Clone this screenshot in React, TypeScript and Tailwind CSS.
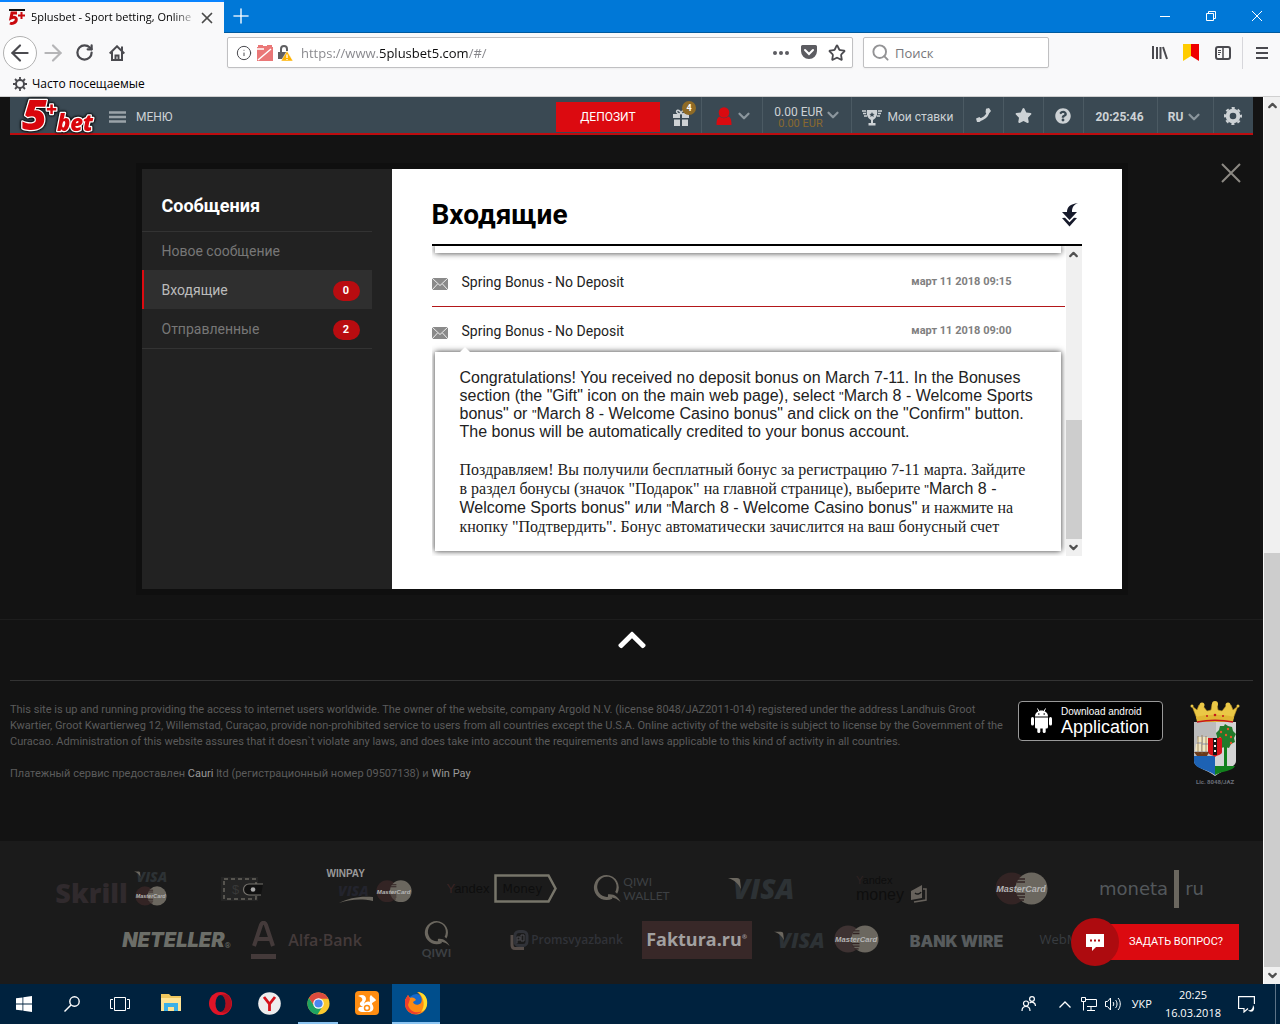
import type { ReactNode } from "react";
import { FaStar, FaQuestionCircle, FaChevronUp } from "react-icons/fa";
import {
	ArrowLeft,
	ArrowRight,
	ChevronDown,
	ChevronUp,
	Info,
	Plus,
	RotateCw,
	Search,
	Star,
	X,
} from "lucide-react";

const ui = "font-['Open_Sans','Noto_Sans',sans-serif]";

function SiteLogo() {
	return (
		<svg
			width="80"
			height="38"
			viewBox="0 0 80 38"
			aria-label="5plusbet"
			className="overflow-visible [filter:drop-shadow(0_0_1px_#000)_drop-shadow(0_0_1px_#000)]"
		>
			<g
				fill="#d9060c"
				stroke="#fff"
				strokeWidth="2.500"
				paintOrder="stroke"
				strokeLinejoin="round"
				fontFamily="'Open Sans', sans-serif"
				fontWeight="800"
				fontStyle="italic"
			>
				<text x="2" y="33" fontSize="43">5</text>
				<text x="26" y="19" fontSize="19">+</text>
				<text x="37" y="34" fontSize="22">bet</text>
			</g>
		</svg>
	);
}

function TitleBar() {
	return (
		<div className="flex h-[33px] items-stretch border-b border-[#005a9e] bg-[#0078d7]">
			<div className="-mb-px flex w-56 items-center border-t-2 border-[#0a84ff] bg-[#f9f9fa] pl-2 pr-2">
				<svg width="17" height="17" viewBox="0 0 17 17" className="shrink-0">
					<path d="M1 1h16" stroke="#111" strokeWidth="2" />
					<path d="M9 4H4L3 9c4-2 6 0 5 3-1 2-4 3-6 2" fill="none" stroke="#c9080d" strokeWidth="3" />
					<path d="M13.500 3v7M10 6.500h7" stroke="#c9080d" strokeWidth="2" />
				</svg>
				<span className="ml-1.5 flex-1 whitespace-nowrap text-[11px] text-black [mask-image:linear-gradient(to_right,black_85%,transparent)]">
					5plusbet - Sport betting, Online
				</span>
				<button aria-label="Закрыть вкладку" className="text-[#4a4a4a]">
					<X size={18} strokeWidth={2.3} />
				</button>
			</div>
			<button aria-label="Новая вкладка" className="px-[5px] text-white/85">
				<Plus size={24} strokeWidth={1.6} />
			</button>
			<div className="ml-auto flex text-white">
				<button aria-label="Свернуть" className="flex w-[46px] items-center justify-center">
					<svg width="10" height="10"><path d="M0 5.500h10" stroke="currentColor" /></svg>
				</button>
				<button aria-label="Развернуть" className="flex w-[46px] items-center justify-center">
					<svg width="10" height="10" fill="none" stroke="currentColor">
						<path d="M.5 2.500h7v7h-7zM2.500 2.500v-2h7v7h-2" />
					</svg>
				</button>
				<button aria-label="Закрыть" className="flex w-[46px] items-center justify-center">
					<svg width="10" height="10"><path d="M0 0l10 10M10 0L0 10" stroke="currentColor" /></svg>
				</button>
			</div>
		</div>
	);
}

function NavBar() {
	return (
		<div className="flex h-[39px] items-center bg-[#f9f9fa] text-[#4a4a4f]">
			<button
				aria-label="Назад"
				className="ml-[3px] flex size-[34px] items-center justify-center rounded-full border border-[#b1b1b1] bg-white"
			>
				<ArrowLeft size={26} strokeWidth={2} />
			</button>
			<button aria-label="Вперёд" className="ml-[3px] text-[#b5b5b7]">
				<ArrowRight size={26} strokeWidth={2} />
			</button>
			<button aria-label="Обновить" className="ml-[9px]">
				<RotateCw size={19} strokeWidth={2.8} />
			</button>
			<button aria-label="Домой" className="ml-[15px]">
				<svg width="16" height="16" viewBox="0 0 16 16" fill="none" stroke="currentColor" strokeWidth="2">
					<path d="M.7 8.500L8 1.300l7.300 7.200M3 7v8h10V7M13 1.500v4" />
					<path d="M6.500 15v-4.500h3V15" />
				</svg>
			</button>
			<div className="ml-[102px] flex h-[31px] min-w-0 flex-1 items-center rounded-xs border border-[#c0c0c2] bg-white px-2 shadow-xs">
				<Info size={16} strokeWidth={1.5} className="shrink-0" />
				<svg width="16" height="16" viewBox="0 0 16 16" className="ml-[5px] shrink-0">
					<path d="M1 0h5v1h4V0h5v2h1v14H0V2h1z" fill="#ea7777" />
					<path d="M0 4h7M1 15L14 4" stroke="#fff" strokeWidth="1.500" />
				</svg>
				<svg width="16" height="16" viewBox="0 0 16 16" className="ml-1 shrink-0">
					<path d="M4 8V4a3 3 0 0 1 6 0v2" fill="none" stroke="#5f5f61" strokeWidth="2" />
					<path d="M1 7h9v7H1z" fill="#5f5f61" />
					<path d="M10 6l6 10H4z" fill="#ffb300" stroke="#fff" strokeWidth=".5" />
					<path d="M10 9.500v3.500M10 14v1" stroke="#fff" strokeWidth="1.300" />
				</svg>
				<input
					aria-label="Адрес"
					defaultValue="https://www.5plusbet5.com/#/"
					className="ml-2 min-w-0 flex-1 bg-[linear-gradient(to_right,#85858a_77px,#0c0c0d_77px,#0c0c0d_168px,#85858a_168px)] bg-clip-text pt-0.5 text-[13px] text-transparent outline-none"
				/>
				<svg width="16" height="4" fill="#5c5c61">
					<circle cx="2" cy="2" r="2" /><circle cx="8" cy="2" r="2" /><circle cx="14" cy="2" r="2" />
				</svg>
				<svg width="16" height="15" viewBox="0 0 16 15" className="ml-3 shrink-0">
					<path d="M1.500 0h13A1.500 1.500 0 0 1 16 1.500V6A8 8 0 0 1 0 6V1.500A1.500 1.500 0 0 1 1.500 0z" fill="#5c5c61" />
					<path d="M4 5l4 4 4-4" fill="none" stroke="#fff" strokeWidth="2" strokeLinecap="round" />
				</svg>
				<Star size={18} strokeWidth={2.4} className="-mr-0.5 ml-[11px] shrink-0" />
			</div>
			<label className="ml-2.5 flex h-[31px] w-[186px] items-center rounded-xs border border-[#c0c0c2] bg-white pl-[7px] shadow-xs">
				<Search size={19} strokeWidth={2.4} className="text-[#939395]" />
				<input
					aria-label="Поиск"
					placeholder="Поиск"
					className="ml-[5px] w-32 pt-0.5 text-[13px] outline-none placeholder:text-[#77777b]"
				/>
			</label>
			<button aria-label="Библиотека" className="ml-[103px]">
				<svg width="16" height="15" stroke="currentColor" strokeWidth="2" fill="none">
					<path d="M1 1v13M5 2v12M8.500 2v12M11 2l4 12" />
				</svg>
			</button>
			<button aria-label="Закладки Яндекс" className="ml-[15px]">
				<svg width="16" height="17">
					<path d="M0 0h8v12L0 17z" fill="#ffcc00" />
					<path d="M8 0h8v17L8 12z" fill="#f00000" />
				</svg>
			</button>
			<button aria-label="Боковая панель" className="ml-4">
				<svg width="16" height="14" fill="none" stroke="currentColor">
					<rect x="1" y="1" width="14" height="12" rx="2" strokeWidth="2" />
					<path d="M8 1v12" strokeWidth="1.500" />
					<path d="M3 4.500h3M3 6.500h3M3 8.500h2" />
				</svg>
			</button>
			<span className="ml-[11px] h-8 w-px bg-[#d7d7db]" />
			<button aria-label="Меню" className="ml-[13px] mr-3">
				<svg width="12" height="12" stroke="currentColor" strokeWidth="2">
					<path d="M0 1h12M0 6h12M0 11h12" />
				</svg>
			</button>
		</div>
	);
}

function HeaderCell({ className, children }: { className: string; children: ReactNode }) {
	return (
		<div className={`flex items-center justify-center border-l border-[#4b5a63] ${className}`}>
			{children}
		</div>
	);
}

function HeaderChevron() {
	return <ChevronDown size={18} strokeWidth={3} className="shrink-0 text-[#8b969d]" />;
}

function SiteHeader() {
	return (
		<header className="flex h-[38px] items-stretch border-b-2 border-[#bd0c0f] bg-[#3a4953] text-xs text-[#cdd2d5]">
			<a href="#/" className="ml-2.5 w-20">
				<SiteLogo />
			</a>
			<button className="ml-[9px] flex items-center gap-2.5 pt-1">
				<svg width="17" height="12" stroke="#9aa3a9" strokeWidth="2.500">
					<path d="M0 1.500h17M0 6h17M0 10.500h17" />
				</svg>
				МЕНЮ
			</button>
			<button className="ml-auto mt-[5px] h-[30px] w-[104px] bg-[#dc0a10] text-white">
				ДЕПОЗИТ
			</button>
			<div className="relative flex w-[41px] items-center justify-center pt-1">
				<svg width="16" height="17" fill="currentColor">
					<path d="M0 5h7v4H0zM9 5h7v4H9zM1 10.500h6V17H1zM9 10.500h6V17H9z" />
					<path d="M7.500 5C3 5 3 1.500 4.500 1.200S8 3 8 5c0-2 2-4 3.500-3.800S13 5 8.500 5" fill="none" stroke="currentColor" strokeWidth="1.500" />
				</svg>
				<span className="absolute left-[22px] top-1 flex size-3.5 items-center justify-center rounded-full bg-[#8f6b26] text-[9px] font-bold text-white">
					4
				</span>
			</div>
			<HeaderCell className="w-[61px] gap-[3px] pl-1 pt-0.5">
				<svg width="16" height="18" fill="#d90a10">
					<circle cx="8" cy="5.500" r="5.300" />
					<path d="M3.500 9.500a6.500 6.500 0 0 0 9 0c2.500 1.200 3 4 3 8.500H.5c0-4.500.5-7.300 3-8.500z" />
				</svg>
				<HeaderChevron />
			</HeaderCell>
			<HeaderCell className="w-[89px] gap-px pl-0.5">
				<div className="pt-[5px] text-right leading-[11px]">
					<div>0.00 EUR</div>
					<div className="text-[11px] text-[#8a6a2f]">0.00 EUR</div>
				</div>
				<HeaderChevron />
			</HeaderCell>
			<HeaderCell className="w-28 gap-1.5 pt-1">
				<svg width="20" height="17" viewBox="0 0 20 17">
					<path d="M5 1h10c1 5-1 8.500-4 10v3h2.500v2.500h-7V14H9v-3C6 9.500 4 6 5 1z" fill="currentColor" />
					<path d="M0 2h4M1 4.500h3M2 7h3M20 2h-4M19 4.500h-3M18 7h-3" stroke="currentColor" strokeWidth="1.600" />
					<path d="M10 3l.8 1.700 1.900.2-1.400 1.200.4 1.900L10 7.100 8.300 8l.4-1.900-1.400-1.200 1.900-.2z" fill="#3a4953" />
				</svg>
				Мои ставки
			</HeaderCell>
			<HeaderCell className="w-10">
				<svg width="15" height="14" viewBox="0 0 15 14">
					<path d="M2 11.500C7 12 12 8 12 3" fill="none" stroke="currentColor" strokeWidth="2.600" />
					<path d="M9.500 4.500L10 .8 13 0l2 3-2.500 3zM0 10.500L3.500 9l2.500 3-2.500 2H1z" fill="currentColor" />
				</svg>
			</HeaderCell>
			<HeaderCell className="w-10"><FaStar size={17} /></HeaderCell>
			<HeaderCell className="w-10 pr-0.5 pt-0.5"><FaQuestionCircle size={16} /></HeaderCell>
			<HeaderCell className="w-[74px] pr-0.5 pt-1 font-bold">20:25:46</HeaderCell>
			<HeaderCell className="w-14 gap-0.5 pt-1 font-bold">
				RU
				<HeaderChevron />
			</HeaderCell>
			<HeaderCell className="w-10 pr-0.5 pt-0.5">
				<svg width="18" height="18" viewBox="-9 -9 18 18" fill="none" stroke="currentColor">
					<circle r="5.300" strokeWidth="4" />
					<circle r="8" strokeWidth="2" strokeDasharray="3.140 3.140" strokeDashoffset="1.570" />
				</svg>
			</HeaderCell>
		</header>
	);
}

const folders = [
	{ name: "Новое сообщение" },
	{ name: "Входящие", count: 0, active: true },
	{ name: "Отправленные", count: 2 },
];

function Sidebar() {
	return (
		<nav className="w-[250px] shrink-0 bg-[#222] pr-5">
			<h2 className="flex h-[63px] items-end border-b border-[#333] pb-[11px] pl-5 text-lg font-bold text-white">
				Сообщения
			</h2>
			<div className="-mt-px border-b border-[#333]">
				{folders.map((folder) => (
					<a
						key={folder.name}
						href="#/"
						className={`flex h-[39px] items-center justify-between border-l-2 pl-[18px] pr-3 text-sm ${
							folder.active
								? "border-[#dc0a10] bg-[#2f2f2f] text-[#bbb]"
								: "border-transparent text-[#777]"
						}`}
					>
						{folder.name}
						{folder.count !== undefined && (
							<span className="mt-0.5 flex h-5 w-[27px] items-center justify-center rounded-full bg-[#b90c10] pt-px text-[11px] font-bold text-white">
								{folder.count}
							</span>
						)}
					</a>
				))}
			</div>
		</nav>
	);
}

function MessageRow({ title, date }: { title: string; date: string }) {
	return (
		<div className="flex items-center text-sm text-[#222]">
			<svg width="16" height="12" className="mt-1">
				<path d="M0 0h16v12H0z" fill="#8a8a8a" />
				<path d="M0 0l8 7.500L16 0M0 12l5.500-6M16 12l-5.500-6" fill="none" stroke="#eee" />
			</svg>
			<span className="ml-3.5 flex-1">{title}</span>
			<time className="mr-[54px] text-[11px] font-bold text-[#808080]">{date}</time>
		</div>
	);
}

function Inbox() {
	return (
		<section className="flex min-w-0 flex-1 flex-col bg-white px-10 pb-[33px]">
			<div className="flex h-[77px] items-center justify-between border-b-2 border-black pt-4">
				<h1 className="text-[28px] font-bold text-black">Входящие</h1>
				<svg width="18" height="24" viewBox="0 0 18 24" fill="#161a2b" className="mr-[3px]">
					<path d="M17 0C9 1 6 4 6 9H1l7.500 8L16 9h-5c0-4 1-7 6-9z" />
					<path d="M1 15l3-.2 4.500 4.500 4.500-4.500 3 .2-7.500 8.500z" />
				</svg>
			</div>
			<div className="flex">
				<div className="min-w-0 flex-1 overflow-hidden pb-[5px]">
					<div className="ml-[3px] mr-[5px] h-[7px] shadow-[0_0_6px_#333]" />
					<div className="mt-[19px]">
						<MessageRow title="Spring Bonus - No Deposit" date="март 11 2018 09:15" />
					</div>
					<div className="mr-px mt-3.5 h-px bg-[#b3171a]" />
					<div className="mt-3.5">
						<MessageRow title="Spring Bonus - No Deposit" date="март 11 2018 09:00" />
					</div>
					<article className="relative ml-[3px] mr-[5px] mt-[11px] bg-white pb-[15px] pl-[25px] pr-[25px] pt-[17px] text-base text-[#222] shadow-[0_0_6px_#333]">
						<span className="absolute -top-[5px] left-[25px] border-x-[5px] border-b-[5px] border-x-transparent border-b-white" />
						<p className="font-['Liberation_Sans',Arial,sans-serif] leading-[18px]">
							Congratulations! You received no deposit bonus on March 7-11. In the Bonuses
							section (the "Gift" icon on the main web page), select{" "}
							<span className="text-[13px] leading-none">"</span>March 8 - Welcome Sports bonus" or{" "}
							<span className="text-[13px] leading-none">"</span>March 8 - Welcome Casino bonus" and
							click on the "Confirm" button. The bonus will be automatically credited to your
							bonus account.
						</p>
						<p className="mt-[19px] font-['Liberation_Serif','Times_New_Roman',serif] leading-[19px]">
							Поздравляем! Вы получили бесплатный бонус за регистрацию 7-11 марта. Зайдите в
							раздел бонусы (значок "Подарок" на главной странице), выберите{" "}
							<span className="font-['Liberation_Sans',Arial,sans-serif] leading-none">
								<span className="text-[13px] leading-none">"</span>March 8 - Welcome Sports bonus"
								или <span className="text-[13px] leading-none">"</span>March 8 - Welcome Casino
								bonus"
							</span>{" "}
							и нажмите на кнопку "Подтвердить". Бонус автоматически зачислится на ваш
							бонусный счет
						</p>
					</article>
				</div>
				<div className="flex w-4 flex-col items-center bg-[#f0f0f0] text-[#505050]">
					<ChevronUp size={13} strokeWidth={4} className="my-0.5" />
					<div className="flex-[157]" />
					<div className="w-full flex-[119] bg-[#cdcdcd]" />
					<ChevronDown size={13} strokeWidth={4} className="my-0.5" />
				</div>
			</div>
		</section>
	);
}

function Crest() {
	return (
		<svg width="50" height="76" viewBox="0 0 50 76">
			<path d="M4 21v39c0 7 12 8 21 15 9-7 21-8 21-15V21z" fill="#d4d4d4" />
			<path d="M4 21h22v34H4z" fill="#bcbcbc" />
			<path d="M4 55h21v19C17 68 4 68 4 60z" fill="#1d62b4" />
			<path d="M25 65h20c-2 5-13 5-20 9z" fill="#12801c" />
			<path d="M34 30h3v37h-3z" fill="#12801c" />
			<path
				d="M35 23l3 2 4 1 1 4 3 3-2 4 1 4-4 2-2 4-4-1-4 1-2-4-3-3 1-4-1-4 3-3 1-4 4 0z"
				fill="#227a2a"
			/>
			<g fill="#e8562a">
				<circle cx="31" cy="31" r="1.200" /><circle cx="38" cy="28" r="1.200" /><circle cx="41" cy="36" r="1.200" />
				<circle cx="36" cy="34" r="1.200" /><circle cx="41" cy="42" r="1.200" /><circle cx="30" cy="37" r="1.200" />
			</g>
			<path d="M18 37h14v14c0 3-5 3-7 5-2-2-7-2-7-5z" fill="#d6131b" />
			<path d="M23 37h4v17h-4z" fill="#161616" />
			<path d="M24 39h2v2h-2zM24 44h2v2h-2zM24 49h2v2h-2z" fill="#fff" />
			<path d="M8 36h4v5H7zM13 36h5v6h-5zM6 43h5v7H5zM12 44h6v6h-6z" fill="#efe5c2" />
			<path d="M4 51h15l-2 4H7z" fill="#6b3a1b" />
			<path d="M12 34v19M8 35v17M16 35v17" stroke="#8a6a3c" strokeWidth=".7" />
			<path
				d="M2 5l5 4 2-5 4 1 4 5 4-1 1-6h5l1 6 4 1 4-5 5-1 2 5 5-4-5 13H7z"
				fill="#ebc846"
				stroke="#b98d20"
				strokeWidth=".6"
			/>
			<g fill="#ebc846">
				<circle cx="2" cy="5" r="1.500" /><circle cx="12" cy="4" r="2.500" /><circle cx="25" cy="3" r="3" />
				<circle cx="38" cy="4" r="2.500" /><circle cx="48" cy="5" r="1.500" />
			</g>
			<path d="M6 16c11-3 27-3 38 0l-1 5H7z" fill="#e0b633" />
			<path d="M7 21c11-2 25-2 36 0" stroke="#c7161c" strokeWidth="1.500" fill="none" />
			<g fill="#c7161c"><circle cx="17" cy="15" r="1" /><circle cx="25" cy="14" r="1.300" /><circle cx="33" cy="15" r="1" /></g>
		</svg>
	);
}

function Legal() {
	return (
		<div className="flex items-start border-t border-[#333] pt-5">
			<div className="min-w-0 flex-1 pt-px text-[11px] leading-4 text-[#5b5b5b]">
				<p>
					This site is up and running providing the access to internet users worldwide. The
					owner of the website, company Argold N.V. (license 8048/JAZ2011-014) registered under
					the address Landhuis Groot Kwartier, Groot Kwartierweg 12, Willemstad, Curaçao,
					provide non-prohibited service to users from all countries except the U.S.A. Online
					activity of the website is subject to license by the Government of the Curacao.
					Administration of this website assures that it doesn`t violate any laws, and does take
					into account the requirements and laws applicable to this kind of activity in all
					countries.
				</p>
				<p className="mt-4">
					Платежный сервис предоставлен <a href="#/" className="text-[#999]">Cauri</a> ltd
					(регистрационный номер 09507138) и <a href="#/" className="text-[#999]">Win Pay</a>
				</p>
			</div>
			<a
				href="#/"
				className="ml-3 flex h-10 w-[145px] shrink-0 items-center gap-[9px] rounded-sm border border-[#999] bg-black pl-3 font-['Liberation_Sans',Arial,sans-serif] text-white"
			>
				<svg width="21" height="26" viewBox="0 0 21 26" fill="#fff" className="shrink-0">
					<path d="M4 8.500C4 5 7 2.500 10.500 2.500S17 5 17 8.500z" />
					<path d="M6.500.5l1.500 3M14.500.5l-1.500 3" stroke="#fff" />
					<circle cx="7.800" cy="6" r=".8" fill="#000" />
					<circle cx="13.200" cy="6" r=".8" fill="#000" />
					<path d="M4 9.500h13V19a1.500 1.500 0 0 1-1.500 1.500h-10A1.500 1.500 0 0 1 4 19z" />
					<rect x="0" y="9" width="3" height="8.500" rx="1.500" />
					<rect x="18" y="9" width="3" height="8.500" rx="1.500" />
					<rect x="6.300" y="17" width="3" height="8" rx="1.500" />
					<rect x="11.700" y="17" width="3" height="8" rx="1.500" />
				</svg>
				<span className="whitespace-nowrap">
					<span className="block text-[10px] leading-[11px]">Download android</span>
					<span className="block text-lg leading-5">Application</span>
				</span>
			</a>
			<div className="ml-[27px] mr-[13px] flex w-[50px] shrink-0 flex-col items-center">
				<Crest />
				<span className="whitespace-nowrap text-[6px] font-bold leading-[10px] text-[#6a6e78]">
					Lic. 8048/JAZ
				</span>
			</div>
		</div>
	);
}

function MasterCard({ width, dark }: { width: number; dark?: string }) {
	return (
		<svg width={width} viewBox="0 0 53 33" className="shrink-0">
			<circle cx="16.500" cy="16.500" r="16" fill={dark ?? "#332424"} />
			<circle cx="36.500" cy="16.500" r="16" fill="#6b675f" />
			<path d="M23 7h7M22 10h8M21 22h9M22 25h8M24 28h5" stroke="#332424" strokeWidth="1.500" />
			<text
				x="26"
				y="20"
				textAnchor="middle"
				fontFamily="'Liberation Sans', sans-serif"
				fontSize="9"
				fontWeight="700"
				fontStyle="italic"
				fill="#b5b5b5"
			>
				MasterCard
			</text>
		</svg>
	);
}

function Visa({ width }: { width: number }) {
	return (
		<svg width={width} viewBox="0 0 68 23" className="shrink-0 overflow-visible">
			<text
				x="5"
				y="22"
				fontFamily="'Open Sans', sans-serif"
				fontSize="28"
				fontWeight="800"
				fontStyle="italic"
				fill="#2d3235"
			>
				VISA
			</text>
			<path d="M0 1h9c2 0 3 1 3 3l1 8C10 6 6 3 0 1z" fill="#6b675f" />
		</svg>
	);
}

function QiwiMark({ size }: { size: number }) {
	return (
		<svg width={size} height={size} viewBox="0 0 28 29">
			<path
				d="M13.500 0a13 13 0 1 0 6 24.500l-1-3a10 10.500 0 1 1 4-4l2 2A13 13 0 0 0 13.500 0z"
				fill="#6b675f"
			/>
			<path d="M15 20c6-1 11 3 13 8-4-4-8-5-13-5z" fill="#6b675f" />
		</svg>
	);
}

const firstRow: ReactNode[] = [
	<div className="flex items-center gap-1.5">
		<span className="pt-2 font-['Open_Sans',sans-serif] text-[27px] font-extrabold leading-none text-[#302a2d]">
			Skrill
		</span>
		<span className="flex flex-col items-center gap-1">
			<Visa width={34} />
			<MasterCard width={32} />
		</span>
	</div>,
	<svg width="42" height="26" viewBox="0 0 42 26" fill="none">
		<path d="M0 1h37v24H0z" fill="#242424" />
		<rect x="3" y="3" width="32" height="20" stroke="#67645e" strokeWidth="1.500" strokeDasharray="4 3" />
		<text x="11" y="18" fontSize="13" fontFamily="'Liberation Sans', sans-serif" fill="#383838">$</text>
		<path d="M42 8H28a5.500 5.500 0 0 0 0 11h12" fill="#111" stroke="#77746f" strokeWidth="1.200" />
		<circle cx="32" cy="13.500" r="2.300" fill="#aaa" />
	</svg>,
	<div className="flex w-[90px] flex-col pb-1">
		<span className="font-['Liberation_Sans',Arial,sans-serif] text-[10px] font-bold leading-[10px] text-[#999]">
			WINPAY
		</span>
		<span className="flex items-center gap-0.5 pl-2.5">
			<svg width="37" height="26" viewBox="0 0 37 26" className="shrink-0">
				<text
					x="1"
					y="17"
					fontFamily="'Open Sans', sans-serif"
					fontSize="14"
					fontWeight="800"
					fontStyle="italic"
					fill="#23242d"
				>
					VISA
				</text>
				<path d="M2 24c10-5 20-7 34-6v4c-14-3-24-1-34 2z" fill="#6b675f" />
			</svg>
			<MasterCard width={36} />
		</span>
	</div>,
	<div className="flex items-center gap-1 text-[#0e0e0e]">
		<span className="font-['Liberation_Sans',sans-serif] text-[13px]">
			<span className="text-[#3a2424]">Y</span>andex
		</span>
		<span className="relative flex h-[29px] w-[63px] items-center pl-[9px] font-['DejaVu_Sans','Open_Sans',sans-serif] text-xs">
			<svg width="63" height="29" viewBox="0 0 63 29" fill="none" className="absolute left-0 top-0">
				<path d="M1.500 1.500h53l7 13-7 13h-53z" stroke="#77756a" strokeWidth="2.500" />
			</svg>
			Money
		</span>
	</div>,
	<div className="flex items-center gap-0.5 font-['Lato',sans-serif] text-xs leading-[14px] text-[#3d4043]">
		<QiwiMark size={28} />
		<span>QIWI<br />WALLET</span>
	</div>,
	<Visa width={68} />,
	<div className="flex items-end gap-1.5 font-['Liberation_Sans',sans-serif] text-[#0e0e0e]">
		<span>
			<span className="block text-[11px] leading-[13px]"><span className="text-[#2e2222]">Y</span>andex</span>
			<span className="block text-base leading-4">money</span>
		</span>
		<svg width="17" height="19" viewBox="0 0 17 19">
			<path d="M1 7l11-6v13L1 16z" fill="#67625c" />
			<path d="M13 5h3v11l-12 2" fill="none" stroke="#67625c" strokeWidth="1.500" />
			<path d="M5 9c2 2 5 1 6-1" fill="none" stroke="#1b1b1b" strokeWidth="1.500" />
		</svg>
	</div>,
	<MasterCard width={53} />,
	<div className="flex items-center gap-1.5 font-['DejaVu_Sans',sans-serif] text-lg text-[#53585b]">
		moneta <span className="h-[38px] w-[5px] bg-[#6b675f]" /> ru
	</div>,
];

const secondRow: ReactNode[] = [
	<div className="flex items-end text-[#6c6e68]">
		<span className="font-['Inter',sans-serif] text-[20px] font-black italic leading-6">NETELLER</span>
		<span className="text-[8px] leading-3">®</span>
	</div>,
	<div className="flex items-center gap-3 text-[#443a3a]">
		<svg width="25" height="38" viewBox="0 0 25 38" fill="none" stroke="currentColor">
			<path d="M3 25L10 4c1-3 4-3 5 0l7 21M6 18h13" strokeWidth="4" />
			<path d="M0 35.500h25" strokeWidth="5" />
		</svg>
		<span className="font-['Open_Sans',sans-serif] text-base font-semibold">Alfa·Bank</span>
	</div>,
	<div className="flex flex-col items-center font-['Lato',sans-serif] text-xs font-bold leading-3 text-[#3d4043]">
		<QiwiMark size={26} />
		QIWI
	</div>,
	<div className="flex items-center gap-0.5 font-['Open_Sans',sans-serif] text-xs font-semibold text-[#303238]">
		<svg width="19" height="20" viewBox="0 0 19 20" fill="none" className="shrink-0">
			<path d="M2 5v10c0 2 1 3.500 3 3.500h9" stroke="#554c48" strokeWidth="3" />
			<rect x="5" y="1.500" width="12" height="14" rx="4" stroke="#303238" strokeWidth="3" />
			<path d="M7 13V7h3v3H7M11 11V5h3v6z" stroke="#4a4a50" />
		</svg>
		Promsvyazbank
	</div>,
	<div className="flex h-[38px] w-[110px] items-center justify-center bg-[#382828] font-['Open_Sans',sans-serif] text-[18px] font-bold text-[#a2a0a0]">
		Faktura.ru<span className="pb-1 text-[6px]">®</span>
	</div>,
	<div className="flex items-center gap-2">
		<Visa width={52} />
		<MasterCard width={45} dark="#3e3232" />
	</div>,
	<span className="whitespace-nowrap pt-0.5 font-['Inter',sans-serif] text-base font-black text-[#575b5d]">
		BANK WIRE
	</span>,
	<span className="w-[94px] pt-px font-['Open_Sans',sans-serif] text-[13px] text-[#383c40]">WebMoney</span>,
];

function Payments() {
	return (
		<div className="flex-1 bg-[#1b1b1b] pb-[19px] pt-[22px]">
			{[firstRow, secondRow].map((row, index) => (
				<div key={index} className="flex justify-center">
					{row.map((logo, i) => (
						<div key={i} className="flex h-[51px] w-[130px] items-center justify-center">
							{logo}
						</div>
					))}
				</div>
			))}
		</div>
	);
}

function ChatButton() {
	return (
		<button className="absolute bottom-[18px] right-6 flex items-center text-[11px] text-white">
			<span className="z-10 flex size-12 items-center justify-center rounded-full bg-[#ad0b0f]">
				<svg width="18" height="17" viewBox="0 0 18 17">
					<path d="M0 0h18v13H10l-4 4v-4H0z" fill="#fff" />
					<path d="M4 6.500h2M8 6.500h2M12 6.500h2" stroke="#ad0b0f" strokeWidth="2" />
				</svg>
			</span>
			<span className="-ml-6 flex h-9 items-center bg-[#dc0a10] pl-[34px] pr-4">ЗАДАТЬ ВОПРОС?</span>
		</button>
	);
}

function PageScrollbar() {
	return (
		<div className="flex w-[17px] shrink-0 flex-col items-center border-l border-white bg-[#f0f0f0] text-[#505050]">
			<ChevronUp size={13} strokeWidth={4} className="my-0.5" />
			<div className="flex-[439]" />
			<div className="w-full flex-[414] bg-[#cdcdcd]" />
			<ChevronDown size={13} strokeWidth={4} className="my-0.5" />
		</div>
	);
}

const taskIcons = [
	{
		name: "Проводник",
		icon: (
			<svg width="22" height="20" viewBox="0 0 22 20">
				<path d="M1 1h8l2 2h10v15H1z" fill="#f0c75e" />
				<path d="M1 5h20v13H1z" fill="#ffe394" />
				<path d="M4 18v-8h14v8h-4v-4H8v4z" fill="#3bb0e8" />
			</svg>
		),
	},
	{
		name: "Opera",
		icon: (
			<svg width="23" height="23" viewBox="0 0 23 23">
				<circle cx="11.500" cy="11.500" r="11.500" fill="#e01427" />
				<path d="M11.500 3c7-3 11 3 11 8.500S18 23 11.500 20C15 19 16.500 16 16.500 11.500S15 4 11.500 3z" fill="#b00f1e" />
				<ellipse cx="11.500" cy="11.500" rx="5" ry="8.500" fill="#00223e" />
			</svg>
		),
	},
	{
		name: "Яндекс",
		icon: (
			<svg width="23" height="23" viewBox="0 0 23 23">
				<circle cx="11.500" cy="11.500" r="11.300" fill="#ededed" />
				<path d="M6 5l5.500 7L17 5M11.500 11v8" stroke="#d6121b" strokeWidth="2.800" fill="none" />
			</svg>
		),
	},
	{
		name: "Chrome",
		open: true,
		icon: (
			<svg width="23" height="23" viewBox="0 0 24 24">
				<circle cx="12" cy="12" r="11.500" fill="#fbc92f" />
				<path d="M2 6.300A11.500 11.500 0 0 1 22.300 7H12L7.500 14.500z" fill="#dc4b3e" />
				<path d="M2 6.300A11.500 11.500 0 0 0 11 23.500l5.500-9-9 0z" fill="#1da362" />
				<circle cx="12" cy="12" r="5.500" fill="#fff" />
				<circle cx="12" cy="12" r="4.300" fill="#4a86ef" />
			</svg>
		),
	},
	{
		name: "UC Browser",
		icon: (
			<svg width="24" height="24" viewBox="0 0 24 24">
				<rect width="24" height="24" rx="4" fill="#ff8d11" />
				<path
					d="M3 5c4-2 8-1 8 3 0 2-2 3-2 5 1-2 4-3 6-2 0-3-1-5 1-7 1 2 4 3 5 5-1 2-4 2-4 4 3 4 1 8-3 8H7c-4 0-5-4-2-5h3c-4-2-4-4-1-6 1-2 0-4-4-5z"
					fill="#fff"
				/>
				<circle cx="12" cy="17" r="2.500" fill="none" stroke="#ff8d11" strokeWidth="1.500" />
			</svg>
		),
	},
	{
		name: "Firefox",
		open: true,
		current: true,
		icon: (
			<svg width="24" height="24" viewBox="0 0 24 24">
				<circle cx="12.500" cy="12" r="9" fill="#1669cb" />
				<path d="M1 9l3-5 2 3c3-1 5 0 6 2l-3 2c1 3 5 4 8 1 2-4 0-8-4-11 7 0 10 6 10 11A11 11 0 0 1 1 13z" fill="#ff8a13" />
				<path d="M1 9l3-5 2 4-2 6c2 7 9 9 14 6-7 7-17 1-17-7z" fill="#ed3e2b" />
				<path d="M14 1c8 1 10 8 9 13-1 4-3 6-6 7 4-5 4-14-3-20z" fill="#ffdc2c" />
			</svg>
		),
	},
];

function Taskbar() {
	return (
		<footer className={`flex h-10 items-stretch bg-[#00223e] text-[11px] text-white ${ui}`}>
			<button aria-label="Пуск" className="flex w-12 items-center justify-center">
				<svg width="16" height="16" fill="#fff">
					<path d="M0 2.300L6.500 1.400v6.200H0zM7.300 1.300L16 0v7.600H7.300zM0 8.400h6.500v6.200L0 13.700zM7.300 8.400H16V16l-8.700-1.300z" />
				</svg>
			</button>
			<button aria-label="Поиск в Windows" className="flex w-12 items-center justify-center">
				<svg width="16" height="16" fill="none" stroke="#fff" strokeWidth="1.400">
					<circle cx="10.500" cy="5.500" r="4.700" />
					<path d="M7 9L.5 15.500" />
				</svg>
			</button>
			<button aria-label="Представление задач" className="mr-[3px] flex w-12 items-center justify-center">
				<svg width="20" height="14" fill="none" stroke="#fff">
					<path d="M4.500.5h11v13h-11zM3 2.500H.5v9H3M17 2.500h2.500v9H17" />
				</svg>
			</button>
			<div className="flex gap-px">
				{taskIcons.map((item) => (
					<button
						key={item.name}
						aria-label={item.name}
						className={`flex w-12 flex-col items-center ${item.current ? "bg-[#004e8c]" : ""}`}
					>
						<span className="flex flex-1 items-center">{item.icon}</span>
						<span
							className={`h-0.5 ${item.current ? "w-12" : "w-10"} ${item.open ? "bg-[#8cc4f0]" : ""}`}
						/>
					</button>
				))}
			</div>
			<div className="ml-auto flex items-center">
				<svg width="16" height="16" fill="none" stroke="#fff" strokeWidth="1.200">
					<circle cx="5" cy="7.500" r="2.500" /><path d="M1 15c0-6 8-6 8 0" />
					<circle cx="11" cy="3" r="2.400" /><path d="M8.500 7c3-2 6 0 6 3" />
				</svg>
				<svg width="12" height="7" fill="none" stroke="#fff" strokeWidth="1.300" className="ml-[22px]">
					<path d="M.5 6.500L6 1l5.500 5.500" />
				</svg>
				<svg width="16" height="14" fill="none" stroke="#fff" className="ml-2.5">
					<path d="M4 2.500h11.500v7H6M.5.500h4v4h-4zM2.500 4.500v9M10 9.500v4M6 13.500h8" />
				</svg>
				<svg width="17" height="14" fill="none" stroke="#fff" className="ml-2">
					<path d="M.5 4.500h2l3-3.500v12l-3-3.500h-2zM8 5c1 1 1 3 0 4M10.500 3c2 2 2 6 0 8M13 1c3 3 3 9 0 12" />
				</svg>
				<span className="ml-2.5">УКР</span>
				<time className="ml-[13px] text-center leading-[18px]">
					20:25
					<br />
					16.03.2018
				</time>
				<svg width="17" height="17" fill="none" stroke="#fff" strokeWidth="1.200" className="ml-[17px]">
					<path d="M10 12.500L6 16v-3.500H.6V.6h15.800V8" />
					<path d="M15 9c0 4-2 6-5 5 2 3 7 2 6-3z" fill="#fff" stroke="none" />
				</svg>
				<span className="ml-5 mr-1 h-10 w-px bg-[#5c7387]" />
			</div>
		</footer>
	);
}

export default function App() {
	return (
		<div className="flex min-h-screen flex-col bg-[#131313] font-['Roboto',sans-serif]">
			<div className={ui}>
				<TitleBar />
				<NavBar />
				<div className="flex h-[25px] items-center border-b border-[#d0d0d0] bg-[#f9f9fa] pl-[13px] text-xs text-black">
					<svg width="14" height="14" viewBox="0 0 14 14" fill="none" stroke="#4a4a4f" className="mr-[5px]">
						<circle cx="7" cy="7" r="4" strokeWidth="2" />
						<path d="M7 0v3M7 11v3M0 7h3M11 7h3M2 2l2 2M10 10l2 2M12 2l-2 2M2 12l2-2" strokeWidth="1.800" />
					</svg>
					Часто посещаемые
				</div>
			</div>
			<div className="flex flex-1">
				<main className="relative flex min-w-0 flex-1 flex-col">
					<div className="px-2.5">
						<SiteHeader />
					</div>
					<button aria-label="Закрыть сообщения" className="absolute right-[22px] top-[66px] text-[#8c8983]">
						<svg width="20" height="20" stroke="currentColor" strokeWidth="2">
							<path d="M1 1l18 18M19 1L1 19" />
						</svg>
					</button>
					<div className="mx-auto mt-[34px] flex min-h-[420px] w-full max-w-[980px] shadow-[0_0_0_6px_#0f0f0f]">
						<Sidebar />
						<Inbox />
					</div>
					<div className="mt-[30px] flex h-[61px] items-start justify-center border-t border-[#1d1d1d] pt-1 text-white">
						<button aria-label="Наверх">
							<FaChevronUp size={32} />
						</button>
					</div>
					<div className="px-2.5 pb-[54px]">
						<Legal />
					</div>
					<Payments />
					<ChatButton />
				</main>
				<PageScrollbar />
			</div>
			<Taskbar />
		</div>
	);
}
